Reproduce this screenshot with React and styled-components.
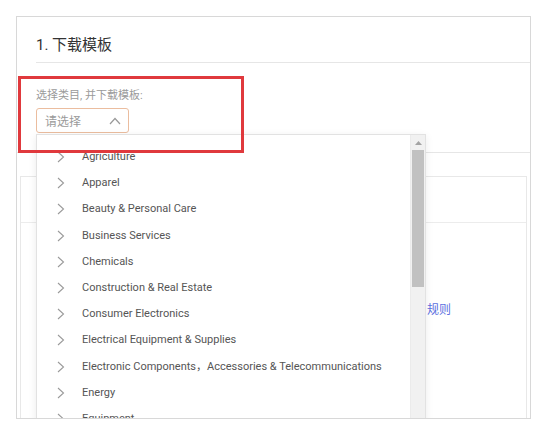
import styled, { createGlobalStyle } from "styled-components";

const categories = [
  "Agriculture",
  "Apparel",
  "Beauty & Personal Care",
  "Business Services",
  "Chemicals",
  "Construction & Real Estate",
  "Consumer Electronics",
  "Electrical Equipment & Supplies",
  "Electronic Components，Accessories & Telecommunications",
  "Energy",
  "Equipment",
];

const GlobalStyle = createGlobalStyle`
  html, body {
    margin: 0;
    padding: 0;
    background: #fff;
  }
  body {
    font-family: Roboto, "Noto Sans CJK SC", sans-serif;
    color: #333;
  }
`;

const Page = styled.div`
  padding: 16px 9px 0 16px;
`;

const Card = styled.div`
  position: relative;
  box-sizing: border-box;
  height: 403px;
  border: 1px solid #d8d8d8;
  background: #fff;
  overflow: hidden;
`;

const SectionHead = styled.div`
  box-sizing: border-box;
  height: 46px;
  margin-left: 19px;
  padding-top: 18px;
  border-bottom: 1px solid #e6e6e6;
  font-size: 15px;
  line-height: 20px;
  color: #333;
`;

const SectionBody = styled.div`
  padding: 26px 19px 19px;
  border-bottom: 1px solid #e6e6e6;
`;

const Label = styled.div`
  font-size: 11px;
  line-height: 14px;
  color: #9a9a9a;
`;

const Select = styled.div`
  box-sizing: border-box;
  margin-top: 5px;
  width: 93px;
  height: 25px;
  padding: 0 7px 0 8px;
  display: flex;
  align-items: center;
  justify-content: space-between;
  border: 1px solid #ebbd9f;
  border-radius: 3px;
  font-size: 12px;
  color: #9a9a9a;
`;

const SubCard = styled.div`
  margin: 23px 3px 0;
  border: 1px solid #e8e8e8;
  height: 300px;
`;

const SubHead = styled.div`
  height: 45px;
  border-bottom: 1px solid #ececec;
`;

const Hint = styled.p`
  margin: 80px 0 0;
  padding-left: 406px;
  font-size: 12px;
  line-height: 14px;
  white-space: nowrap;
`;

const Link = styled.span`
  color: #5b6fe0;
`;

const Dropdown = styled.div`
  position: absolute;
  left: 19px;
  top: 117px;
  width: 390px;
  height: 301px;
  box-sizing: border-box;
  display: grid;
  grid-template-columns: 1fr 15px;
  background: #fff;
  border: 1px solid #e2e2e2;
  border-bottom: none;
  box-shadow: 0 2px 8px rgba(0, 0, 0, 0.08);
  z-index: 2;
`;

const List = styled.ul`
  margin: 0;
  padding: 9px 0 0;
  list-style: none;
  overflow: hidden;
`;

const Item = styled.li`
  height: 26.2px;
  display: flex;
  align-items: center;
  padding-left: 20px;
  gap: 17px;
  font-size: 11px;
  line-height: 14px;
  color: #555;
  white-space: nowrap;
`;

const Track = styled.div`
  display: flex;
  flex-direction: column;
  align-items: center;
  background: #f1f1f1;
  border-left: 1px solid #ebebeb;
`;

const Arrow = styled.div`
  height: 15px;
  display: flex;
  align-items: center;
  justify-content: center;
`;

const Thumb = styled.div`
  width: 12px;
  height: 137px;
  background: #c1c1c1;
`;

const Highlight = styled.div`
  position: absolute;
  left: 1px;
  top: 59px;
  width: 226px;
  height: 77px;
  box-sizing: border-box;
  border: 3px solid #e0393d;
  z-index: 3;
`;

function Chevron() {
  return (
    <svg width="8" height="12" viewBox="0 0 8 12">
      <path d="M1 1 L6.5 6 L1 11" fill="none" stroke="#9a9a9a" strokeWidth="1.1" />
    </svg>
  );
}

export default function App() {
  return (
    <>
      <GlobalStyle />
      <Page>
        <Card>
          <SectionHead>1. 下载模板</SectionHead>
          <SectionBody>
            <Label>选择类目, 并下载模板:</Label>
            <Select>
              <span>请选择</span>
              <svg width="12" height="8" viewBox="0 0 12 8">
                <path d="M1 7 L6 1.5 L11 7" fill="none" stroke="#999" strokeWidth="1.2" />
              </svg>
            </Select>
          </SectionBody>
          <SubCard>
            <SubHead />
            <Hint>
              <Link>规则</Link>
            </Hint>
          </SubCard>

          <Dropdown>
            <List>
              {categories.map((name) => (
                <Item key={name}>
                  <Chevron />
                  <span>{name}</span>
                </Item>
              ))}
            </List>
            <Track>
              <Arrow>
                <svg width="7" height="4" viewBox="0 0 7 4">
                  <path d="M0 4 L3.5 0 L7 4 Z" fill="#a3a3a3" />
                </svg>
              </Arrow>
              <Thumb />
            </Track>
          </Dropdown>
          <Highlight />
        </Card>
      </Page>
    </>
  );
}
